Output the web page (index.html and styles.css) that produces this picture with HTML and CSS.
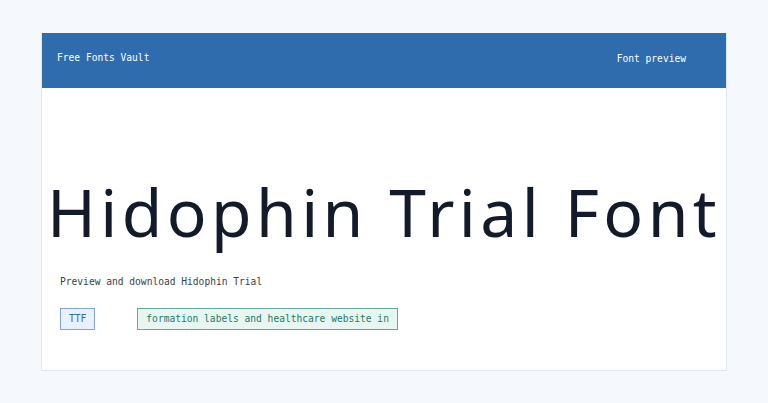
FILE: index.html
```html
<!DOCTYPE html>
<html lang="en">

<head>
    <meta charset="UTF-8">
    <meta name="viewport" content="width=device-width, initial-scale=1.0">
    <title>Hidophin Trial Font - Free Fonts Vault</title>
    <link rel="stylesheet" href="styles.css">
</head>

<body>
    <div class="card">
        <header class="topbar">
            <span class="brand">Free Fonts Vault</span>
            <span class="nav-link">Font preview</span>
        </header>

        <main class="preview">
            <h1 class="font-title">Hidophin Trial Font</h1>
            <p class="subtitle">Preview and download Hidophin Trial</p>
            <div class="tags">
                <span class="tag tag-format">TTF</span>
                <span class="tag tag-sample">formation labels and healthcare website in</span>
            </div>
        </main>
    </div>
</body>

</html>
```

FILE: styles.css
```css
body {
    margin: 0;
    padding: 33px 41px;
    background-color: #f5f9fd;
    font-family: "DejaVu Sans Mono", "Liberation Mono", monospace;
    font-size: 9.6px;
}

.card {
    background-color: #fff;
    border: 1px solid #e3e8ef;
    border-top: none;
}

.topbar {
    display: flex;
    justify-content: space-between;
    align-items: center;
    height: 55px;
    padding: 0 40px 0 15px;
    background-color: #2f6cad;
    color: #fff;
}

.brand {
    margin-bottom: 7px;
}

.nav-link {
    margin-bottom: 5px;
}

.preview {
    padding: 88px 18px 40px;
}

/* the sample line is wider than the text column, let it use the card edges */
.font-title {
    margin: 0 -14px;
    text-align: center;
    font-family: "Noto Sans", sans-serif;
    font-weight: 400;
    font-size: 66px;
    line-height: 70px;
    letter-spacing: 4.4px;
    color: #131a2a;
    white-space: nowrap;
}

.subtitle {
    margin: 30px 0 0;
    color: #3a3f4a;
}

.tags {
    display: flex;
    gap: 42px;
    margin-top: 21px;
}

.tag {
    padding: 5px 8px;
    line-height: 10px;
    border: 1px solid;
}

.tag-format {
    background-color: #e8f1fd;
    border-color: #7ea6d6;
    color: #2f6cad;
}

.tag-sample {
    background-color: #e7f6f1;
    border-color: #62a99b;
    color: #1d7a66;
}
```
